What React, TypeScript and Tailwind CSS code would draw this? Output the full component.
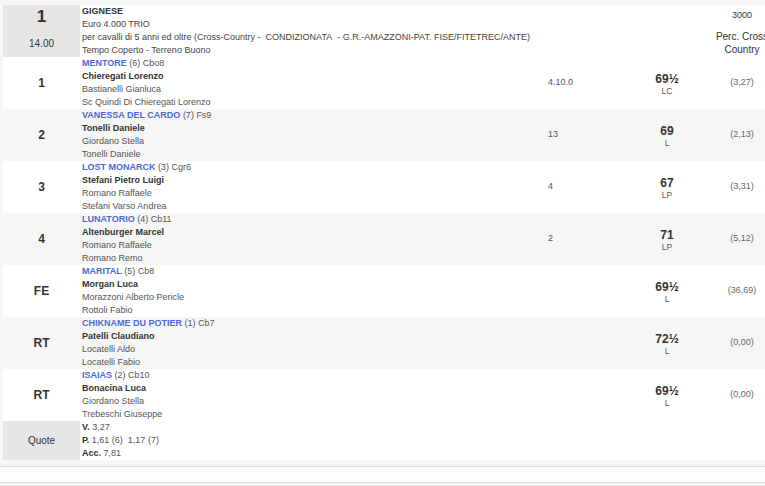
import React from 'react';

type Runner = {
  pos: string;
  horse: string;
  extra: string;
  jockey: string;
  trainer: string;
  owner: string;
  dist?: string;
  weight: string;
  tag: string;
  odds: string;
};

const runners: Runner[] = [
  { pos: '1', horse: 'MENTORE', extra: '(6) Cbo8', jockey: 'Chieregati Lorenzo', trainer: 'Bastianelli Gianluca', owner: 'Sc Quindi Di Chieregati Lorenzo', dist: '4.10.0', weight: '69½', tag: 'LC', odds: '(3,27)' },
  { pos: '2', horse: 'VANESSA DEL CARDO', extra: '(7) Fs9', jockey: 'Tonelli Daniele', trainer: 'Giordano Stella', owner: 'Tonelli Daniele', dist: '13', weight: '69', tag: 'L', odds: '(2,13)' },
  { pos: '3', horse: 'LOST MONARCK', extra: '(3) Cgr6', jockey: 'Stefani Pietro Luigi', trainer: 'Romano Raffaele', owner: 'Stefani Varso Andrea', dist: '4', weight: '67', tag: 'LP', odds: '(3,31)' },
  { pos: '4', horse: 'LUNATORIO', extra: '(4) Cb11', jockey: 'Altenburger Marcel', trainer: 'Romano Raffaele', owner: 'Romano Remo', dist: '2', weight: '71', tag: 'LP', odds: '(5,12)' },
  { pos: 'FE', horse: 'MARITAL', extra: '(5) Cb8', jockey: 'Morgan Luca', trainer: 'Morazzoni Alberto Pericle', owner: 'Rottoli Fabio', weight: '69½', tag: 'L', odds: '(36,69)' },
  { pos: 'RT', horse: 'CHIKNAME DU POTIER', extra: '(1) Cb7', jockey: 'Patelli Claudiano', trainer: 'Locatelli Aldo', owner: 'Locatelli Fabio', weight: '72½', tag: 'L', odds: '(0,00)' },
  { pos: 'RT', horse: 'ISAIAS', extra: '(2) Cb10', jockey: 'Bonacina Luca', trainer: 'Giordano Stella', owner: 'Trebeschi Giuseppe', weight: '69½', tag: 'L', odds: '(0,00)' },
];

const grid = 'grid grid-cols-[77px_465px_75px_94px_56px]';

function RunnerRow({ r, odd }: { r: Runner; odd: boolean }) {
  return (
    <div className={`${grid} h-[52px] ${odd ? 'bg-white' : 'bg-[#f6f6f6]'}`}>
      <div className="flex items-center justify-center text-[12px] font-bold text-[#333]">{r.pos}</div>
      <div className="pl-[2px] leading-[13px] text-[#555]">
        <div>
          <span className="font-bold text-[#4a6bd3]">{r.horse}</span> {r.extra}
        </div>
        <div className="font-bold text-[#333]">{r.jockey}</div>
        <div>{r.trainer}</div>
        <div>{r.owner}</div>
      </div>
      <div className="flex items-center pl-[3px] text-[#555]">{r.dist}</div>
      <div className="flex flex-col items-center justify-center pt-[2px]">
        <span className="text-[12px] font-bold leading-[14px] text-[#333]">{r.weight}</span>
        <span className="text-[8.5px] leading-[11px] text-[#555]">{r.tag}</span>
      </div>
      <div className="flex items-center justify-center text-[#666]">{r.odds}</div>
    </div>
  );
}

export default function App() {
  return (
    <div className="w-[765px] h-[486px] overflow-hidden bg-[#f6f6f6] text-[9px] font-['Liberation_Sans',Arial,sans-serif]">
      <div className="w-[770px] pl-[3px] pt-[5px]">
        {/* testata corsa */}
        <div className={`${grid} h-[52px] bg-white`}>
          <div className="flex flex-col items-center bg-[#e6e6e6] pt-[2px] text-[#333]">
            <span className="text-[17px] font-bold leading-[20px]">1</span>
            <span className="mt-[10px] text-[10px] leading-[13px]">14.00</span>
          </div>
          <div className="col-span-3 pl-[2px] leading-[13px] text-[#444]">
            <div className="font-bold text-[#333]">GIGNESE</div>
            <div>Euro 4.000 TRIO</div>
            <div>per cavalli di 5 anni ed oltre (Cross-Country -&nbsp; CONDIZIONATA&nbsp; - G.R.-AMAZZONI-PAT. FISE/FITETREC/ANTE)</div>
            <div>Tempo Coperto - Terreno Buono</div>
          </div>
          <div className="flex flex-col items-center pt-[4px] text-center leading-[13px] text-[#333]">
            <span>3000</span>
            <span className="mt-[8px] text-[10px] leading-[13px]">Perc. Cross Country</span>
          </div>
        </div>

        {runners.map((r, i) => (
          <RunnerRow key={i} r={r} odd={i % 2 === 0} />
        ))}

        {/* quote */}
        <div className={`${grid} h-[39px] bg-white`}>
          <div className="flex items-center justify-center bg-[#e6e6e6] text-[10px] text-[#333]">Quote</div>
          <div className="col-span-4 flex flex-col justify-center pl-[2px] leading-[13px] text-[#555]">
            <div><b className="text-[#333]">V.</b> 3,27</div>
            <div><b className="text-[#333]">P.</b> 1,61 (6)&nbsp; 1,17 (7)</div>
            <div><b className="text-[#333]">Acc.</b> 7,81</div>
          </div>
        </div>
      </div>
      <div className="mt-[6px] h-[17px] border-y border-[#dedede] bg-[#fdfdfd]" />
    </div>
  );
}
